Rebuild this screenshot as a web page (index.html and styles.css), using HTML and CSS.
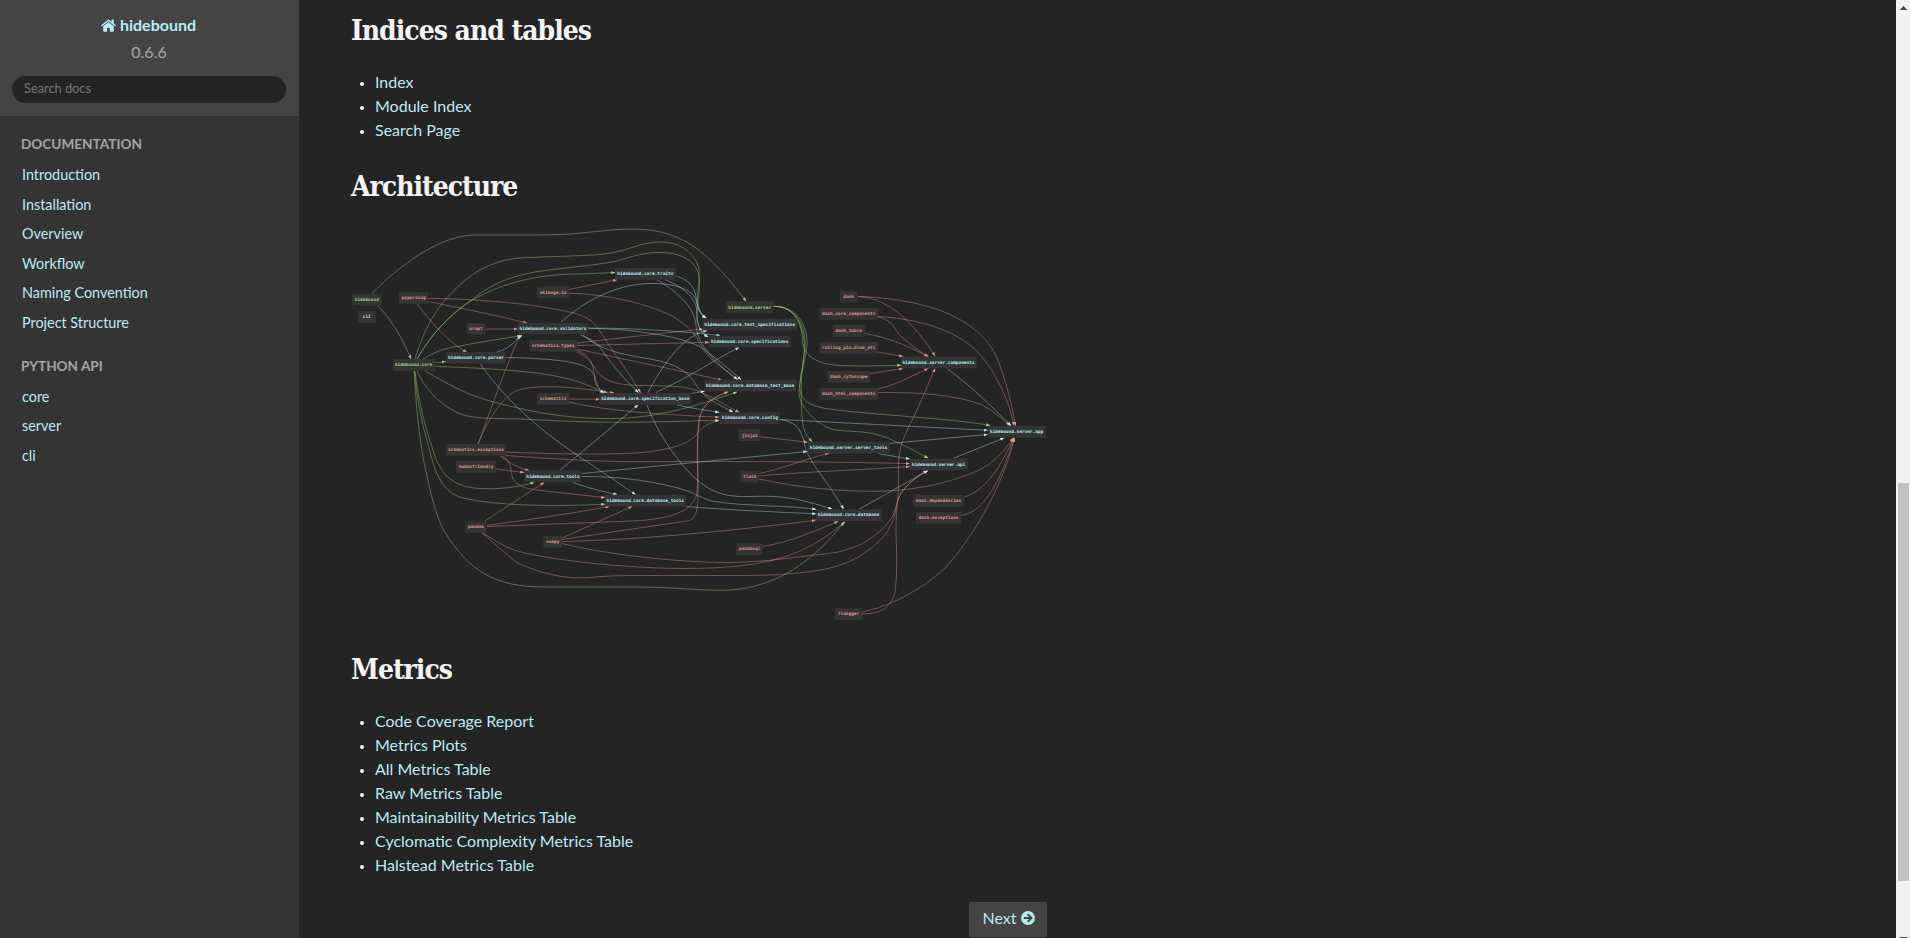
FILE: index.html
```html
<!DOCTYPE html>
<html lang="en">
<head>
<meta charset="utf-8">
<title>hidebound</title>
<link rel="stylesheet" href="styles.css">
</head>
<body>
<div class="page">
  <nav class="side">
    <div class="side-head">
      <a class="brand"><svg class="home" viewBox="0 0 15 13"><path d="M7.5 2.9 2.2 7.3V12q0 .8.8.8h3.1V9h2.8v3.8H12q.8 0 .8-.8V7.3z"/><path d="M14.8 6.3 12.8 4.6V.9q0-.3-.3-.3h-1.6q-.3 0-.3.3v1.8L8.4.9q-.9-.7-1.8 0L.2 6.3q-.2.2 0 .4l.5.6q.2.2.5 0l6.3-5.2 6.3 5.2q.3.2.5 0l.5-.6q.2-.2 0-.4z"/></svg>hidebound</a>
      <div class="version">0.6.6</div>
      <input class="search" type="text" placeholder="Search docs">
    </div>
    <p class="caption">DOCUMENTATION</p>
    <ul class="menu"><li>Introduction</li><li>Installation</li><li>Overview</li><li>Workflow</li><li>Naming Convention</li><li>Project Structure</li></ul>
    <p class="caption second">PYTHON API</p>
    <ul class="menu"><li>core</li><li>server</li><li>cli</li></ul>
  </nav>
  <main class="content">
    <h2 class="title t-indices"><span>Indices and tables</span></h2>
    <ul class="links"><li><a>Index</a></li><li><a>Module Index</a></li><li><a>Search Page</a></li></ul>
    <h2 class="title t-arch"><span>Architecture</span></h2>
    <svg class="graph" viewBox="351 222 700 402">
      <defs>
        <marker id="ag" class="head-g" markerUnits="userSpaceOnUse" markerWidth="5" markerHeight="4" refX="3.8" refY="1.5" orient="auto"><path d="M0 0 4.4 1.5 0 3z"/></marker>
        <marker id="ar" class="head-r" markerUnits="userSpaceOnUse" markerWidth="5" markerHeight="4" refX="3.8" refY="1.5" orient="auto"><path d="M0 0 4.4 1.5 0 3z"/></marker>
        <marker id="ab" class="head-b" markerUnits="userSpaceOnUse" markerWidth="5" markerHeight="4" refX="3.8" refY="1.5" orient="auto"><path d="M0 0 4.4 1.5 0 3z"/></marker>
      </defs>
      <g class="edges red">
        <path d="M428 298.3C470 299 520 302 560 310C580 314 590 317 597 327C612 350 627 370 640.5 392.5"/>
        <path d="M428 301.5C460 308 495 315 527 323"/>
        <path d="M417 304C430 320 445 340 466.5 352"/>
        <path d="M486 329H517.5"/>
        <path d="M569 289.5 617 279.7"/>
        <path d="M569 293.3C610 294 650 305 672 316C690 327 696 335 700 344C706 357 722 368 738 379.5"/>
        <path d="M577 343C620 338 665 333 703 329"/>
        <path d="M577 345.5 709 342.3"/>
        <path d="M577 349 722 380"/>
        <path d="M576 350C592 355 594 368 594.5 378C595 388 600 390 607 392.7"/>
        <path d="M576 351.5C590 357 593 367 599 374C608 382 618 385 640 385.5C665 386 680 385 695 390C712 396 725 405 739 412.3"/>
        <path d="M569 399 599.5 399.3"/>
        <path d="M568.5 402C610 411 650 414 719 417.2"/>
        <path d="M478 444C488 418 502 375 520 335.5"/>
        <path d="M478 444C490 415 505 393 522 389C545 384 580 388 614 393"/>
        <path d="M506 452.2C560 454 600 455 640 452.8C680 449 692 440 696 435C702 427 708 423 719 420.5"/>
        <path d="M506 455.5C560 459.5 600 461.5 640 461.8C740 461 850 462 909.5 463.6"/>
        <path d="M500 456C508 461 515 467 529 470.5"/>
        <path d="M502 456C513 462 510 472 513 479C518 488 530 489 545 491C565 493 585 495.5 605 497.6"/>
        <path d="M496 469 524 472.5"/>
        <path d="M485 521 544 482.5"/>
        <path d="M487 525.5C525 520 570 514 609 506.5"/>
        <path d="M487 526.5C550 524 600 522.5 640 520.5C680 518 694 507 697 493C699 460 696 440 699 420C702 403 714 397 728 391.8"/>
        <path d="M483 533C500 544 510 550 525 553C570 563 640 568.5 685 568.5C760 568 800 560 845 522"/>
        <path d="M482 533 516 562C545 576 570 579 590 577.5C610 575.5 625 575.5 650 575.5H730C830 576 857 565 885 535C900 515 893 500 905 488C912 480 920 475 927 470.5"/>
        <path d="M562 538 632 506.5"/>
        <path d="M562 539.5 690 520.5C699 516 698 500 698 480C697 450 697 435 700 418C703 402 715 397 728 391.8"/>
        <path d="M562 541.5C640 540 740 530 815.5 520.2"/>
        <path d="M562 543.5C600 553 670 562.5 730 562.5C770 562 800 556 825 554C860 550 880 535 893 516C897 505 897 497 905 488C912 480 920 475 927 470.5"/>
        <path d="M760 436.8 807.5 442.2"/>
        <path d="M759 473.5C785 468 805 459 829 453.2"/>
        <path d="M759 475.8C810 471.5 860 470 909.5 466.5"/>
        <path d="M759 479C800 488 840 491.5 880 491.3C920 490 950 482 975 472C995 463 1005 450 1013 438"/>
        <path d="M763 546.5C790 542 815 531 838 521.5"/>
        <path d="M858 296.5C890 298 915 325 935 356"/>
        <path d="M858 296.5C950 300 985 330 998 360C1007 385 1012 405 1015.5 425.5"/>
        <path d="M878 317C895 321 893 329 901 336C909 344 918 350 928 356.5"/>
        <path d="M878 316.3C930 320 965 335 983 358C1000 380 1010 405 1014 425.5"/>
        <path d="M864.5 333.3C890 338 910 347 928 356.5"/>
        <path d="M878 352 903 356.5"/>
        <path d="M870 373.5 903 368.5"/>
        <path d="M878 389C895 385 910 377 928 368.5"/>
        <path d="M878 392.5C930 392 960 397 980 404C992 410 1001 417 1009.5 425.5"/>
        <path d="M963.5 497C985 492 1002 465 1013.5 438"/>
        <path d="M961 515.5C985 513 1003 475 1014 438"/>
        <path d="M862 612C905 603 935 577 945 568C975 535 1003 485 1014.5 438"/>
        <path d="M862 614C885 614 892 604 895 592C898 570 896 545 896 525C896 510 899 495 898.5 480C897 440 905 438 921 401L935 368.5"/>
      </g>
      <g class="edges green">
        <path d="M372 293.5C400 265 440 235 475 235C520 235 545 235.5 570 234C595 232 612 229 633 229C690 229 715 262 746 301"/>
        <path d="M378 306C390 318 402 337 411 359"/>
        <path d="M415 359C425 325 440 302 460 285C480 266 502 258 530 257.5C560 256 585 256 605 254C628 251 640 242 661 242C684 242 698 258 699 270C700 285 696 295 698 304C700 311 702 315 706 318"/>
        <path d="M417 359C430 335 450 315 473 299C495 281 515 276 535 272C560 268 590 266 612 262C630 258 642 252 661 252.5C688 253 699 266 699.5 280C700 300 694 315 698 324C700 331 704 334 708 337"/>
        <path d="M417 359C432 333 455 308 478 297C510 280 545 274 580 274L615 272.5"/>
        <path d="M423 359C440 349 447 348 460 346C485 341 505 338.5 521 335.5"/>
        <path d="M435 363 445.5 361.5"/>
        <path d="M435 366.3C475 368 530 370 560 377C580 381 592 387 604 392.5"/>
        <path d="M425 371C450 385 465 394 490 401C530 412 565 418 600 418.5C650 420 690 408 737 392"/>
        <path d="M417 371C427 393 445 409 465 415.5C480 419 500 418.5 520 419C560 421 590 422.3 627 422.3C660 422 690 421 719 420.3"/>
        <path d="M415 371C418 400 426 430 433 450C440 474 452 487 480 488.5C502 489.5 515 487 534 482.7"/>
        <path d="M414.5 371C417 405 424 430 430 452C438 484 448 494 463 498C500 506.5 560 506.5 605 504.2"/>
        <path d="M414 371C417 420 421 452 428 480C432 500 437 518 444 531C470 572 495 587 545 587H635C670 587 690 590 722 590.3C775 590 815 560 844 522"/>
        <path d="M773.5 306.3C795 306 802 325 802.5 340C803 355 815 364 840 365.5C865 366.5 885 365.5 901 365.3"/>
        <path d="M773.5 306.3C800 306 808 330 807 345C805 365 799 375 800 390C802 402 812 406 826 408.5C870 415 950 418 990 425.5"/>
        <path d="M773.5 306.3C798 306 806 330 805 345C804 365 799 380 799 394C801 410 820 427 835 430C855 432 865 431 880 435.5C900 442 912 450 928 458"/>
        <path d="M773.5 306.3C800 306 806 335 804 355C801 375 801 390 801.5 405C802 425 803 433 812 441.5"/>
      </g>
      <g class="edges blue">
        <path d="M497 352C512 348 514 340 522 335.5"/>
        <path d="M506 357.5C530 358 560 359 578 364C597 370 594 378 597 384C599 389 601 391 604 392.5"/>
        <path d="M480 363.5C500 392 530 424 580 457L635.5 494.5"/>
        <path d="M561 322C575 310 590 300 600 296C620 286 640 283 655 283.5C680 284 694 292 696 300C698 310 700 314 706 318"/>
        <path d="M588 328C630 328 680 331 720 335.5"/>
        <path d="M588 328.3C640 329 690 338 705 350C718 360 730 370 741 379.5"/>
        <path d="M580 335C595 340 598 345 602 350C612 365 625 380 638.5 392.5"/>
        <path d="M583 335C600 350 620 354 650 359C680 364 690 375 695 383C703 397 715 403 733 412"/>
        <path d="M676 276C690 280 695 288 696 297C698 310 700 314 706 318"/>
        <path d="M665 279.5C685 288 696 298 697 312C697 325 700 332 708 337"/>
        <path d="M657 279.5C675 291 694 305 696 325C697 345 715 362 737 379.5"/>
        <path d="M648 392.5C665 360 685 335 707 330.5"/>
        <path d="M656 392.5C690 377 710 362 739 347.5"/>
        <path d="M691.5 393.3 704.5 391.3"/>
        <path d="M677 405C690 408 705 410 719 412.3"/>
        <path d="M647 405C658 435 680 465 697 480C715 495 730 497 750 496.5C785 495 800 499 832 509"/>
        <path d="M560 470.3 638 405"/>
        <path d="M581.5 473.5 807 451.5"/>
        <path d="M581.5 476.5C620 476 660 482 688 491C700 496 705 500 715 501.5C750 507 790 505 816 509.5"/>
        <path d="M573 482.5C585 487 600 491 617 494.5"/>
        <path d="M686 506.5C730 510 775 512 816 513.8"/>
        <path d="M780 419.5 987.5 430.3"/>
        <path d="M780 419.5C803 422 803 440 806 450C812 465 830 485 843.5 509"/>
        <path d="M889 443.5 987.5 434.5"/>
        <path d="M878 453.5 909.5 459"/>
        <path d="M947 368.5C970 385 990 405 1011 425.5"/>
        <path d="M953 458.5 1004 438"/>
        <path d="M859 509.3 928 470.5"/>
      </g>
      <g class="boxes">
        <rect x="352" y="294" width="29.7" height="11.7"/><rect x="399" y="292.2" width="29.3" height="11.7"/><rect x="358" y="311" width="17.7" height="11.7"/><rect x="537" y="286.4" width="32" height="11.7"/><rect x="467" y="323" width="18.7" height="11.7"/><rect x="517.7" y="322.7" width="70.6" height="11.7"/><rect x="529.3" y="340" width="47.4" height="11.7"/><rect x="446" y="352" width="60" height="11.7"/><rect x="392.7" y="359" width="42.3" height="11.7"/><rect x="537" y="393" width="32" height="11.7"/>
        <rect x="615" y="268" width="60.7" height="11.7"/><rect x="726" y="301.3" width="47.6" height="11.7"/><rect x="702.3" y="318.7" width="94.7" height="11.7"/><rect x="708.7" y="335.7" width="82" height="11.7"/><rect x="704.3" y="379.7" width="91.7" height="11.7"/><rect x="599.3" y="393" width="92" height="11.7"/>
        <rect x="840" y="290.7" width="17.7" height="11.7"/><rect x="819.7" y="308" width="58.3" height="11.7"/><rect x="832.7" y="325" width="32.3" height="11.7"/><rect x="819.7" y="342" width="58.3" height="11.7"/><rect x="900.7" y="356.7" width="76" height="11.7"/><rect x="827.3" y="371" width="42.7" height="11.7"/><rect x="819.7" y="388" width="58.3" height="11.7"/><rect x="987.7" y="426" width="58" height="11.7"/>
        <rect x="446" y="444" width="60" height="11.7"/><rect x="456" y="461" width="40" height="11.7"/><rect x="524.3" y="470.5" width="57.4" height="11.7"/><rect x="465.3" y="521.3" width="21.4" height="11.7"/><rect x="543.3" y="536" width="18.7" height="11.7"/>
        <rect x="719" y="412.3" width="61" height="11.7"/><rect x="739" y="429.3" width="21.3" height="11.7"/><rect x="740.3" y="470.7" width="18.7" height="11.7"/><rect x="604.7" y="494.7" width="81.3" height="11.7"/><rect x="736.3" y="543.3" width="26.7" height="11.7"/>
        <rect x="807.7" y="441.7" width="82" height="11.7"/><rect x="909.7" y="458.7" width="58" height="11.7"/><rect x="815.7" y="509.3" width="66" height="11.7"/><rect x="913.3" y="495" width="50.4" height="11.7"/><rect x="916" y="512" width="45" height="11.7"/><rect x="835" y="608.3" width="27" height="11.7"/>
      </g>
      <g class="names green">
        <text x="366.8" y="300.7">hidebound</text><text x="413.6" y="365.7">hidebound.core</text><text x="749.7" y="308.5">hidebound.server</text>
      </g>
      <g class="names blue">
        <text x="366.8" y="317.7">cli</text><text x="553" y="329.7">hidebound.core.validators</text><text x="476" y="358.7">hidebound.core.parser</text><text x="645.3" y="274.7">hidebound.core.traits</text><text x="749.7" y="325.5">hidebound.core.test_specifications</text><text x="749.7" y="342.7">hidebound.core.specifications</text><text x="750" y="386.6">hidebound.core.database_test_base</text><text x="645.3" y="399.7">hidebound.core.specification_base</text><text x="938.5" y="363.6">hidebound.server.components</text><text x="1016.5" y="432.7">hidebound.server.app</text><text x="553" y="477.6">hidebound.core.tools</text><text x="749.8" y="418.7">hidebound.core.config</text><text x="645.3" y="501.6">hidebound.core.database_tools</text><text x="848.5" y="448.7">hidebound.server.server_tools</text><text x="938.5" y="465.7">hidebound.server.api</text><text x="848.5" y="515.7">hidebound.core.database</text>
      </g>
      <g class="names red">
        <text x="413.6" y="298.7">pyparsing</text><text x="553" y="293.6">skimage.io</text><text x="476" y="329.7">wrapt</text><text x="553" y="346.7">schematics.types</text><text x="553" y="399.7">schematics</text><text x="848.7" y="297.7">dash</text><text x="848.7" y="314.7">dash_core_components</text><text x="848.7" y="331.7">dash_table</text><text x="848.7" y="348.7">rolling_pin.blob_etl</text><text x="848.7" y="377.7">dash_cytoscape</text><text x="848.7" y="394.7">dash_html_components</text><text x="476" y="450.7">schematics.exceptions</text><text x="476" y="467.7">humanfriendly</text><text x="476" y="527.7">pandas</text><text x="552.8" y="542.7">numpy</text><text x="749.7" y="436.6">jinja2</text><text x="749.7" y="477.6">flask</text><text x="749.7" y="549.7">pandasql</text><text x="938.5" y="501.7">dash.dependencies</text><text x="938.5" y="518.7">dash.exceptions</text><text x="848.5" y="614.7">flasgger</text>
      </g>
    </svg>
    <h2 class="title t-metrics"><span>Metrics</span></h2>
    <ul class="links"><li><a>Code Coverage Report</a></li><li><a>Metrics Plots</a></li><li><a>All Metrics Table</a></li><li><a>Raw Metrics Table</a></li><li><a>Maintainability Metrics Table</a></li><li><a>Cyclomatic Complexity Metrics Table</a></li><li><a>Halstead Metrics Table</a></li></ul>
    <a class="next">Next <svg class="arrow" viewBox="0 0 14 14"><circle cx="7" cy="7" r="6.9"/><path d="M2.8 7H10M6.7 3.2 10.5 7l-3.8 3.8"/></svg></a>
  </main>
  <div class="scroll"><svg class="tick" viewBox="0 0 7 4"><path d="M3 0h1v1h1v1h1v1h1v1H0V3h1V2h1V1h1z"/></svg><div class="thumb"></div><svg class="tick down" viewBox="0 0 7 4"><path d="M3 0h1v1h1v1h1v1h1v1H0V3h1V2h1V1h1z"/></svg></div>
</div>
</body>
</html>
```

FILE: styles.css
```css
* { box-sizing: border-box; }
body { margin: 0; background: #242424; color: #f4f4f4; font: 16px/24px Lato, sans-serif; overflow: hidden; }
ul, p, h2 { margin: 0; padding: 0; }
.page { display: flex; width: 100%; height: 938px; overflow: hidden; }
.side { width: 299px; background: #343434; flex: none; }
.side-head { height: 116px; background: #444; padding: 13px 13px 0 12px; display: flex; flex-direction: column; align-items: center; }
.brand { display: flex; align-items: center; gap: 4px; color: #b6ecf3; font-weight: 700; height: 24px; margin-right: 1px; }
.home { width: 15px; height: 13px; fill: #b6ecf3; }
.version { color: #a4a4a4; margin: 3px 0 12px; }
.search { width: 274px; height: 27px; border: 0; border-radius: 14px; background: #242424; padding: 0 12px 3px; font: 12.8px Lato, sans-serif; }
.search::placeholder { color: #757575; opacity: 1; }
.caption { color: #a4a4a4; font-size: 13.6px; font-weight: 700; line-height: 32px; height: 32px; padding-left: 21px; margin-top: 12px; }
.caption.second { margin-top: 12px; }
.menu { list-style: none; color: #b6ecf3; font-size: 14.4px; padding-left: 22px; }
.menu li { line-height: 29.6px; height: 29.6px; }
.content { flex: 1; padding-left: 52px; display: flex; flex-direction: column; align-items: flex-start; }
.title { font: 700 28px/36px "Roboto Slab", "DejaVu Serif Condensed", "DejaVu Serif", serif; font-stretch: condensed; letter-spacing: -1px; height: 36px; white-space: nowrap; }
.t-indices { margin: 13px 0 21px; }
.t-arch { margin: 27px 0 17px; }
.t-metrics { margin: 28px 0 21px; }
.links { padding-left: 24px; color: #f4f4f4; }
.links li { height: 24px; }
.links li::marker { font-size: 12px; }
.links a { color: #b6ecf3; }
.graph { width: 700px; height: 402px; flex: none; display: block; }
.edges path { fill: none; stroke-width: 1; stroke-opacity: .42; }
.edges.green path { stroke: #a0d17b; marker-end: url(#ag); }
.edges.red path { stroke: #de958e; marker-end: url(#ar); }
.edges.blue path { stroke: #b6ecf3; marker-end: url(#ab); stroke-opacity: .4; }
.head-g path { fill: #a0d17b; }
.head-r path { fill: #de958e; }
.head-b path { fill: #b6ecf3; }
.boxes rect { fill: #343434; }
.names text { font: 700 4.45px "DejaVu Sans Mono", monospace; text-anchor: middle; }
.names.green { fill: #a0d17b; }
.names.red { fill: #de958e; }
.names.blue { fill: #b6ecf3; }
.next { margin: 25px 0 0 618px; width: 78px; height: 35px; flex: none; display: flex; align-items: center; justify-content: center; gap: 4px; background: #444; border-radius: 2px; color: #b6ecf3; padding: 0 0 4px 1px; }
.arrow { width: 14px; height: 14px; }
.arrow circle { fill: #b6ecf3; }
.arrow path { fill: none; stroke: #444; stroke-width: 2; }
.scroll { width: 14px; flex: none; background: #f1f1f1; display: flex; flex-direction: column; align-items: center; padding: 6px 1px 0 2px; }
.tick { width: 7px; height: 4px; fill: #505050; flex: none; }
.thumb { width: 11px; height: 398px; background: #c1c1c1; margin-top: 473px; flex: none; }
.down { transform: scaleY(-1); margin: auto 0 -3px; }
```
